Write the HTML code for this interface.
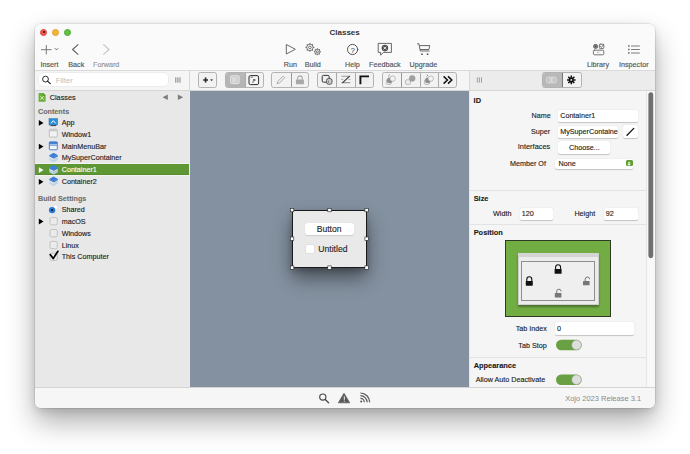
<!DOCTYPE html>
<html><head><meta charset="utf-8">
<style>
*{box-sizing:border-box;margin:0;padding:0}
html,body{width:690px;height:454px;overflow:hidden;background:#fff}
body{position:relative;font-family:"Liberation Sans",sans-serif;color:#222}
.a{position:absolute}
.t{position:absolute;white-space:nowrap;line-height:1}
#win{position:absolute;left:35px;top:23.5px;width:620px;height:384.1px;border-radius:6px;background:#fafafa;
 box-shadow:0 0 0 0.5px rgba(0,0,0,0.14),0 14px 28px rgba(0,0,0,0.32),0 3px 8px rgba(0,0,0,0.12);overflow:hidden}
#pg{position:absolute;left:-35px;top:-23.5px;width:690px;height:454px}
.lbl{font-size:7.2px;color:#555;-webkit-text-stroke:0.15px #555}
.side{font-size:7.2px;color:#1a1a1a;-webkit-text-stroke:0.12px #1a1a1a}
.hdr{font-size:7.2px;color:#6e6e6e;font-weight:bold;-webkit-text-stroke:0.1px #6e6e6e}
.ins{font-size:7.2px;color:#1a1a1a;-webkit-text-stroke:0.12px #1a1a1a}
.seg{position:absolute;top:72px;height:16px;border:1px solid #b3b3b3;border-radius:2.5px;background:#f2f2f2;overflow:hidden}
.dv{position:absolute;top:0;bottom:0;width:1px;background:#c2c2c2}
.fld{position:absolute;background:#fff;box-shadow:0 0.5px 1px rgba(0,0,0,0.2);border-radius:1.5px}
</style></head><body>
<div id="win"><div id="pg">
 <!-- toolbar -->
 <div class="a" style="left:35px;top:23px;width:620px;height:47px;background:#fafafa"></div>
 <div class="a" style="left:35px;top:70px;width:620px;height:1px;background:#dadada"></div>
 <!-- traffic lights -->
 <div class="a" style="left:40px;top:28.5px;width:7px;height:7px;border-radius:50%;background:#ee5a52;border:0.5px solid #d8463e"></div>
 <div class="a" style="left:42.6px;top:31px;width:2px;height:2px;border-radius:50%;background:#4a0a08;z-index:2"></div>
 <div class="a" style="left:52.3px;top:28.5px;width:7px;height:7px;border-radius:50%;background:#f4b63a;border:0.5px solid #dea02a"></div>
 <div class="a" style="left:64.4px;top:28.5px;width:7px;height:7px;border-radius:50%;background:#5fc33f;border:0.5px solid #4aa92e"></div>
 <div class="t bold" style="left:329.5px;top:28.6px;font-size:8px;font-weight:bold;color:#333">Classes</div>

 <div class="t lbl" style="left:40.5px;top:61px">Insert</div>
 <div class="t lbl" style="left:68.3px;top:61px">Back</div>
 <div class="t lbl" style="left:93px;top:61px;color:#b8b8b8">Forward</div>
 <div class="t lbl" style="left:283.8px;top:61px">Run</div>
 <div class="t lbl" style="left:304.8px;top:61px">Build</div>
 <div class="t lbl" style="left:345px;top:61px">Help</div>
 <div class="t lbl" style="left:369px;top:61px">Feedback</div>
 <div class="t lbl" style="left:409.6px;top:61px">Upgrade</div>
 <div class="t lbl" style="left:587px;top:61px">Library</div>
 <div class="t lbl" style="left:619px;top:61px">Inspector</div>

 <!-- second toolbar row -->
 <div class="a" style="left:35px;top:71px;width:620px;height:19px;background:#f5f5f5"></div>
 <div class="a" style="left:470px;top:71px;width:185px;height:19px;background:#ececec"></div>
 <div class="a" style="left:35px;top:90px;width:620px;height:1px;background:#d6d6d6"></div>
 <div class="a" style="left:189px;top:71px;width:1px;height:19px;background:#d8d8d8"></div>
 <div class="a" style="left:469px;top:71px;width:1px;height:19px;background:#d8d8d8"></div>

 <!-- inspector toolbar control -->
 <div class="seg" style="left:541.9px;width:39.9px;background:#f3f3f3"><div class="a" style="left:0;top:0;width:19.4px;height:14px;background:#b9b9b9"></div><div class="dv" style="left:19.4px;background:#777"></div></div>
 <svg class="a" style="left:0;top:0" width="690" height="454" viewBox="0 0 690 454">
  <rect x="546.9" y="77.2" width="9.2" height="5.6" rx="1" fill="none" stroke="#e4e4e4" stroke-width="0.9"/>
  <text x="551.5" y="82" font-family="Liberation Sans" font-size="5" font-weight="bold" fill="#e8e8e8" text-anchor="middle">ID</text>
  <path d="M573.50 79.90L575.60 79.90M572.86 81.46L574.34 82.94M571.30 82.10L571.30 84.20M569.74 81.46L568.26 82.94M569.10 79.90L567.00 79.90M569.74 78.34L568.26 76.86M571.30 77.70L571.30 75.60M572.86 78.34L574.34 76.86" stroke="#111" stroke-width="1.5"/>
  <circle cx="571.30" cy="79.90" r="2.6" fill="#111"/>
  <circle cx="571.30" cy="79.90" r="0.9" fill="#f7f7f7"/>
 </svg>
 <!-- filter -->
 <div class="a" style="left:38.8px;top:72.5px;width:129px;height:13.3px;background:#fff;border-radius:4px;box-shadow:0 0 0 0.5px #e4e4e4"></div>
 <div class="t" style="left:55.8px;top:77px;font-size:7.6px;color:#bdbdbd">Filter</div>

 <!-- sidebar -->
 <div class="a" style="left:35px;top:91px;width:154px;height:296px;background:#e8e8e8"></div>
 <div class="a" style="left:189px;top:91px;width:1px;height:296px;background:#ececec"></div>
 <div class="t side" style="left:49.7px;top:93.8px;font-size:7.3px">Classes</div>
 <div class="t hdr" style="left:38px;top:107.6px">Contents</div>
 <div class="a" style="left:35px;top:164px;width:154px;height:11.4px;background:#5e9733;box-shadow:0 -1px 0 rgba(255,255,255,0.45),0 1px 0 rgba(255,255,255,0.45),inset 0 -1px 0 rgba(0,0,0,0.07)"></div>
 <div class="t side" style="left:61.7px;top:118.5px">App</div>
 <div class="t side" style="left:61.7px;top:131px">Window1</div>
 <div class="t side" style="left:61.7px;top:142.6px">MainMenuBar</div>
 <div class="t side" style="left:61.7px;top:154.2px">MySuperContainer</div>
 <div class="t side" style="left:61.7px;top:166.1px;color:#fff;-webkit-text-stroke:0.12px #fff">Container1</div>
 <div class="t side" style="left:61.7px;top:177.6px">Container2</div>
 <div class="t hdr" style="left:38px;top:195px">Build Settings</div>
 <div class="t side" style="left:61.7px;top:206px">Shared</div>
 <div class="t side" style="left:61.7px;top:217.7px">macOS</div>
 <div class="t side" style="left:61.7px;top:230px">Windows</div>
 <div class="t side" style="left:61.7px;top:241.7px">Linux</div>
 <div class="t side" style="left:61.7px;top:252.5px">This Computer</div>



 <!-- canvas toolbar -->
 <div class="seg" style="left:198.2px;width:19.2px"></div>
 <div class="seg" style="left:225.1px;width:38.8px"><div class="a" style="left:0;top:0;width:19.4px;height:14px;background:linear-gradient(#b9b9b9,#b3b3b3)"></div><div class="dv" style="left:19.4px;background:#aaa"></div></div>
 <div class="seg" style="left:271.3px;width:38px"><div class="dv" style="left:18.3px;background:#999"></div></div>
 <div class="seg" style="left:317.2px;width:56.9px"><div class="dv" style="left:17.7px;background:#aaa"></div><div class="dv" style="left:36.4px;background:#aaa"></div></div>
 <div class="seg" style="left:381.6px;width:75.6px"><div class="dv" style="left:18px;background:#999"></div><div class="dv" style="left:37.2px;background:#aaa"></div><div class="dv" style="left:55.1px;background:#aaa"></div></div>
 <svg class="a" style="left:0;top:0" width="690" height="454" viewBox="0 0 690 454">
  <!-- +v -->
  <path d="M205.6 77.6V82.4M203.2 80H208" stroke="#2a2a2a" stroke-width="1.7"/>
  <path d="M210.6 79.6H212.6L211.6 80.9Z" fill="#333" stroke="#333" stroke-width="0.4"/>
  <!-- seg 2 icons -->
  <rect x="230.6" y="75.8" width="8.6" height="7.8" rx="1.2" fill="#c4c4c4" stroke="#ececec" stroke-width="0.9"/>
  <rect x="232" y="77" width="5.8" height="5.4" fill="#d6d6d6"/>
  <path d="M233.6 77V82.4" stroke="#eee" stroke-width="0.6"/>
  <rect x="249" y="75.6" width="9.6" height="9" rx="1.5" fill="#f4f4f4" stroke="#2a2a2a" stroke-width="1"/>
  <path d="M250.6 77.2H252.8" stroke="#333" stroke-width="0.7"/>
  <rect x="253" y="79.2" width="2.4" height="1.6" fill="#555"/><rect x="252.3" y="81.3" width="1.4" height="1.4" fill="#666"/>
  <!-- pencil -->
  <path d="M277.1 83.6L277.8 81.4L283 76.2L284.6 77.8L279.4 83Z" fill="none" stroke="#999" stroke-width="0.8"/>
  <!-- lock -->
  <path d="M297.6 79.8V78.2A2.3 2.3 0 0 1 302.2 78.2V79.8" fill="none" stroke="#a8a8a8" stroke-width="1.1"/>
  <rect x="295.9" y="79.6" width="8" height="4.6" rx="0.5" fill="#a8a8a8"/>
  <!-- group4 icons -->
  <rect x="322.2" y="75.4" width="7" height="6.8" rx="1.3" fill="#eee" stroke="#333" stroke-width="1"/>
  <rect x="326.6" y="78.6" width="5.4" height="5.6" rx="1.8" fill="#d0d0d0" stroke="#444" stroke-width="0.9"/>
  <path d="M328.6 80.6V82.6" stroke="#333" stroke-width="0.6"/>
  <path d="M341.4 76.2H350.2M341.4 82.6H350.2" fill="none" stroke="#9a9a9a" stroke-width="1.1"/>
  <path d="M342.4 82.8L349.6 76.2" fill="none" stroke="#333" stroke-width="1.1"/>
  <path d="M341 79.4H343.4M348.2 79.4H350.6" stroke="#aaa" stroke-width="0.9"/>
  <rect x="360.4" y="76.2" width="8.6" height="7.8" fill="#ededed"/>
  <path d="M360.4 84.2V76.4H369" fill="none" stroke="#111" stroke-width="1.9"/>
  <!-- group5 icons -->
  <g stroke="#999" stroke-width="0.6">
   <rect x="386.4" y="79.8" width="4.8" height="4.6" rx="1" fill="#eee"/><circle cx="389.6" cy="80.4" r="2.6" fill="#8e8e8e"/><circle cx="392.6" cy="78.6" r="2.7" fill="#f2f2f2"/>
   <rect x="405.6" y="79.8" width="4.8" height="4.6" rx="1" fill="#eee"/><circle cx="412.2" cy="78.4" r="2.9" fill="#a0a0a0"/>
   <rect x="424.6" y="79.8" width="4.8" height="4.6" rx="1" fill="#eee"/><circle cx="427.8" cy="80.4" r="2.6" fill="#8e8e8e"/><circle cx="430.8" cy="78.6" r="2.7" fill="#f2f2f2"/>
  </g>
  <path d="M388.4 76.2L389.8 74.8M426.6 76.2L428 74.8" stroke="#666" stroke-width="0.9"/>
  <path d="M443.6 76.4L447.4 80L443.6 83.6M448 76.4L451.8 80L448 83.6" fill="none" stroke="#111" stroke-width="1.5"/>
 </svg>
 <!-- canvas -->
 <div class="a" style="left:190px;top:91px;width:279px;height:296px;background:#8491a0"></div>


 <!-- container control -->
 <div class="a" style="left:292px;top:210px;width:75px;height:58px;background:#e9e9e9;border:1px solid #1a1a1a;box-shadow:0 10px 18px rgba(0,0,0,0.45),0 3px 6px rgba(0,0,0,0.2)"></div>
 <div class="a" style="left:305.3px;top:222.8px;width:48.7px;height:12.7px;background:#fff;border-radius:3px;box-shadow:0 0.5px 1px rgba(0,0,0,0.12)"></div>
 <div class="t" style="left:316.7px;top:224.6px;font-size:8.6px;color:#222;-webkit-text-stroke:0.12px #222">Button</div>
 <div class="a" style="left:306.4px;top:244.5px;width:7.9px;height:8.2px;background:#fff;border-radius:1.5px;box-shadow:0 0 0 0.5px rgba(0,0,0,0.08)"></div>
 <div class="t" style="left:318.3px;top:244.5px;font-size:8.6px;color:#222;-webkit-text-stroke:0.12px #222">Untitled</div>
 <svg class="a" style="left:0;top:0" width="690" height="454" viewBox="0 0 690 454">
  <g fill="#fff" stroke="#222" stroke-width="0.6">
   <rect x="290.4" y="208.4" width="3.4" height="3.4"/><rect x="327.8" y="208.4" width="3.4" height="3.4"/><rect x="364.9" y="208.4" width="3.4" height="3.4"/>
   <rect x="290.4" y="237" width="3.4" height="3.4"/><rect x="364.9" y="237" width="3.4" height="3.4"/>
   <rect x="290.4" y="265.9" width="3.4" height="3.4"/><rect x="327.8" y="265.9" width="3.4" height="3.4"/><rect x="364.9" y="265.9" width="3.4" height="3.4"/>
  </g>
 </svg>
 <!-- status bar -->
 <div class="a" style="left:35px;top:387px;width:620px;height:1px;background:#d4d4d4"></div>
 <div class="a" style="left:35px;top:388px;width:620px;height:20px;background:#f6f6f6"></div>
 <div class="t" style="left:565.2px;top:395px;font-size:7.5px;color:#8a8a8a">Xojo 2023 Release 3.1</div>

 <!-- inspector -->
 <div class="a" style="left:469px;top:91px;width:1px;height:296px;background:#e8e8e8"></div>
 <div class="a" style="left:470px;top:91px;width:185px;height:296px;background:#f5f5f5"></div>
 <div class="a" style="left:646px;top:91px;width:9px;height:296px;background:#f8f8f8;border-left:1px solid #e6e6e6"></div>


 <div class="t ins bold" style="left:473.6px;top:97.3px;font-weight:bold;font-size:7.4px">ID</div>
 <div class="t ins" style="left:531.6px;top:112.3px">Name</div>
 <div class="t ins" style="left:530.9px;top:127.8px">Super</div>
 <div class="t ins" style="left:517.8px;top:143.3px;font-size:7.4px">Interfaces</div>
 <div class="t ins" style="left:510px;top:159.5px">Member Of</div>
 <div class="fld" style="left:558.3px;top:110px;width:80.1px;height:12.3px"></div>
 <div class="t ins" style="left:560.2px;top:112px">Container1</div>
 <div class="fld" style="left:558.3px;top:125.6px;width:60.2px;height:12.4px;overflow:hidden"><div class="t ins" style="left:1.9px;top:2.7px">MySuperContainer</div></div>
 <div class="fld" style="left:622.7px;top:124.8px;width:15.7px;height:13.2px;border-radius:2px"></div>
 <div class="fld" style="left:558.3px;top:141.3px;width:52px;height:12.4px;border-radius:2.5px"></div>
 <div class="t ins" style="left:569px;top:143.6px">Choose...</div>
 <div class="fld" style="left:555px;top:158.6px;width:78.4px;height:10px;border-radius:2px"></div>
 <div class="t ins" style="left:558.6px;top:160.3px">None</div>
 <div class="a" style="left:625.6px;top:160.2px;width:7px;height:6.3px;border-radius:1.5px;background:#5f9e35"></div>
 <div class="a" style="left:470px;top:190px;width:176px;height:1px;background:#e3e3e3"></div>
 <div class="t ins bold" style="left:473.7px;top:194.9px;font-weight:bold;font-size:7.4px">Size</div>
 <div class="t ins" style="left:493px;top:209.8px">Width</div>
 <div class="fld" style="left:519.6px;top:207.9px;width:33.9px;height:11.8px"></div>
 <div class="t ins" style="left:521.7px;top:210.4px">120</div>
 <div class="t ins" style="left:574.4px;top:209.8px">Height</div>
 <div class="fld" style="left:603.8px;top:207.9px;width:34.5px;height:11.8px"></div>
 <div class="t ins" style="left:605.7px;top:210.4px">92</div>
 <div class="a" style="left:470px;top:224px;width:176px;height:1px;background:#e3e3e3"></div>
 <div class="t ins bold" style="left:473.7px;top:229px;font-weight:bold;font-size:7.4px">Position</div>
 <div class="a" style="left:505px;top:240.4px;width:105.5px;height:77px;background:#72ad44;border:1px solid #2e3a24"></div>
 <div class="a" style="left:517.5px;top:252.9px;width:81px;height:52.5px;background:#ececec;border:1px solid #cfcfcf;box-shadow:0 1.5px 2px rgba(0,0,0,0.35)"></div>
 <div class="a" style="left:518px;top:253.4px;width:80px;height:4px;background:#d4d4d4"></div>
 <div class="a" style="left:520.8px;top:260.8px;width:74px;height:40.7px;background:#efefef;border:1px solid #8e8e8e"></div>
 <div class="t ins" style="left:515.7px;top:324.6px">Tab Index</div>
 <div class="fld" style="left:554.8px;top:322.3px;width:79px;height:13.1px"></div>
 <div class="t ins" style="left:557px;top:325.2px">0</div>
 <div class="t ins" style="left:518.3px;top:341.6px">Tab Stop</div>
 <div class="a" style="left:470px;top:356.5px;width:176px;height:1px;background:#e3e3e3"></div>
 <div class="t ins bold" style="left:473.7px;top:362px;font-weight:bold;font-size:7.4px">Appearance</div>
 <div class="t ins" style="left:475.7px;top:376px">Allow Auto Deactivate</div>
 <svg class="a" style="left:0;top:0" width="690" height="454" viewBox="0 0 690 454">
  <path d="M627 135.2L633.8 128.4" stroke="#111" stroke-width="1.3" stroke-linecap="round"/>
  <path d="M627.4 163.6L629.1 161.6L630.8 163.6ZM627.4 164L629.1 166L630.8 164Z" fill="#fff" opacity="0.9"/>
  <!-- locks -->
  <g id="lk">
   <path d="M555.6 269.3V267.3A2.5 2.5 0 0 1 560.6 267.3V269.3" fill="none" stroke="#111" stroke-width="1.1"/>
   <rect x="554.6" y="269" width="7" height="4.8" rx="0.6" fill="#111"/>
   <path d="M526.8 281.2V279.2A2.5 2.5 0 0 1 531.8 279.2V281.2" fill="none" stroke="#111" stroke-width="1.1"/>
   <rect x="525.8" y="280.9" width="7" height="4.8" rx="0.6" fill="#111"/>
  </g>
  <g>
   <path d="M585.2 281V279.2A2.2 2.2 0 0 1 589.6 279.2" fill="none" stroke="#777" stroke-width="1"/>
   <rect x="583" y="280.9" width="6.6" height="4.3" rx="0.5" fill="#777"/>
   <path d="M556.7 293.2V291.4A2.2 2.2 0 0 1 561.1 291.4" fill="none" stroke="#777" stroke-width="1"/>
   <rect x="554.8" y="293.1" width="6.6" height="4.3" rx="0.5" fill="#777"/>
  </g>
  <!-- toggles -->
  <rect x="556" y="339.8" width="25.7" height="10.4" rx="5.2" fill="#69a043"/>
  <circle cx="576.5" cy="345" r="4.7" fill="#dedede" stroke="#b0b0b0" stroke-width="0.5"/>
  <rect x="556" y="374.5" width="25.7" height="10.4" rx="5.2" fill="#69a043"/>
  <circle cx="576.5" cy="379.7" r="4.7" fill="#dedede" stroke="#b0b0b0" stroke-width="0.5"/>
  <!-- scrollbar -->
  <rect x="648.4" y="92.2" width="4.8" height="166" rx="2.4" fill="#6f6f6f"/>
  <!-- status icons -->
  <circle cx="322.8" cy="397.1" r="3.1" fill="none" stroke="#4a4a4a" stroke-width="1.2"/>
  <path d="M325.2 399.5L328.6 402.7" stroke="#4a4a4a" stroke-width="1.3" stroke-linecap="round"/>
  <path d="M344 393.2L349.7 402.8H338.3Z" fill="#5a5a5a" stroke="#5a5a5a" stroke-width="0.7" stroke-linejoin="round"/>
  <path d="M344.3 396.4V399.8M344.3 400.7V401.7" stroke="#f6f6f6" stroke-width="1"/>
  <g fill="none" stroke="#555" stroke-width="1.2">
   <path d="M360.4 398.4A3.9 3.9 0 0 1 364.3 402.3"/>
   <path d="M360.4 395.6A6.7 6.7 0 0 1 367.1 402.3"/>
   <path d="M360.4 393A9.3 9.3 0 0 1 369.7 402.3"/>
  </g>
  <circle cx="361.2" cy="401.6" r="1" fill="#555"/>
 </svg>
 <svg class="a" style="left:0;top:0" width="690" height="454" viewBox="0 0 690 454">
  <g fill="none" stroke="#6a6a6a" stroke-width="1" stroke-linecap="round" stroke-linejoin="round">
   <!-- insert + -->
   <path d="M46.3 45.4V54M41.4 49.7H51.2" stroke="#6a6a6a" stroke-width="0.9"/>
   <path d="M55.2 48.6L56.5 49.9L57.8 48.6" stroke="#555" stroke-width="1"/>
   <!-- back / forward -->
   <path d="M78 44.6L72.6 49.5L78 54.3" stroke="#5c5c5c" stroke-width="1.05"/>
   <path d="M103.6 44.6L109 49.5L103.6 54.3" stroke="#c4c4c4" stroke-width="1.05"/>
   <!-- run -->
   <path d="M286.3 44.9V54L295 49.45Z" stroke="#6a6a6a" stroke-width="1"/>
   <!-- help -->
   <circle cx="352.6" cy="49.5" r="5.1" stroke="#555" stroke-width="1"/>
   <!-- feedback -->
   <path d="M378.6 43.4H391.4V52.4H383.4L380.6 55.2V52.4H378.6Z" stroke="#666" stroke-width="1"/>
   <!-- cart -->
   <path d="M417.4 43.8H418.9L420.3 51H429.2M419.8 45.6H429.8L428.9 49.5H420.4" stroke="#666" stroke-width="1"/>
   <!-- library -->
   <rect x="593.4" y="50.2" width="10.4" height="4.6" rx="1" stroke="#666" stroke-width="0.9"/>
   <rect x="599.4" y="44.2" width="4.4" height="4.4" rx="0.8" stroke="#666" stroke-width="0.9"/>
   <path d="M600.3 46.4L601.4 47.4L603.6 44.6" stroke="#555" stroke-width="0.8"/>
  </g>
  <!-- help ? -->
  <text x="352.6" y="52.5" font-family="Liberation Sans" font-size="7.8" fill="#333" text-anchor="middle">?</text>
  <!-- feedback x-circle -->
  <circle cx="384.9" cy="48.1" r="3.3" fill="#505050"/>
  <path d="M383.5 46.7L386.3 49.5M386.3 46.7L383.5 49.5" stroke="#f4f4f4" stroke-width="0.9"/>
  <circle cx="422" cy="54.2" r="0.9" fill="#555"/>
  <circle cx="427.6" cy="54.2" r="0.9" fill="#555"/>
  <!-- library bits -->
  <circle cx="595.6" cy="46.4" r="2.1" fill="#8a8a8a" stroke="#555" stroke-width="0.7"/><circle cx="595.6" cy="46.4" r="0.8" fill="#444"/>
  <path d="M597 52.4H600" stroke="#888" stroke-width="0.8" stroke-dasharray="0.8 0.6"/>
 
  <!-- inspector icon -->
  <g fill="#777"><rect x="628" y="45.2" width="1.6" height="1.6"/><rect x="628" y="48.7" width="1.6" height="1.6"/><rect x="628" y="52.2" width="1.6" height="1.6"/></g>
  <g stroke="#7a7a7a" stroke-width="1"><path d="M631 46H639.8M631 49.5H639.8M631 53H639.8"/></g>
  <!-- gears -->
  <g fill="none" stroke="#6a6a6a"><circle cx="309.90" cy="47.40" r="3.20" stroke-width="0.9"/><path d="M313.10 47.40L314.30 47.40M312.16 49.66L313.01 50.51M309.90 50.60L309.90 51.80M307.64 49.66L306.79 50.51M306.70 47.40L305.50 47.40M307.64 45.14L306.79 44.29M309.90 44.20L309.90 43.00M312.16 45.14L313.01 44.29" stroke-width="1.1" stroke-linecap="butt"/><circle cx="309.90" cy="47.40" r="1.30" stroke-width="0.9"/><circle cx="317.40" cy="51.80" r="2.50" stroke-width="0.9"/><path d="M319.90 51.80L320.90 51.80M319.17 53.57L319.87 54.27M317.40 54.30L317.40 55.30M315.63 53.57L314.93 54.27M314.90 51.80L313.90 51.80M315.63 50.03L314.93 49.33M317.40 49.30L317.40 48.30M319.17 50.03L319.87 49.33" stroke-width="1.1" stroke-linecap="butt"/><circle cx="317.40" cy="51.80" r="1.00" stroke-width="0.9"/></g>
 </svg>

 <!-- filter magnifier & grips -->
 <svg class="a" style="left:0;top:0" width="690" height="454" viewBox="0 0 690 454">
  <circle cx="45.5" cy="79.1" r="2.9" fill="none" stroke="#222" stroke-width="0.95"/>
  <path d="M47.5 81.1L50.3 83.6" stroke="#222" stroke-width="1.2" stroke-linecap="round"/>
  <path d="M175.8 77.3V82.7M177.9 77.3V82.7M180 77.3V82.7" stroke="#666" stroke-width="0.8"/>
  <path d="M477.3 77.3V82.7M479.4 77.3V82.7M481.5 77.3V82.7" stroke="#8a8a8a" stroke-width="0.8"/>
  <!-- classes nav arrows -->
  <path d="M167.8 94.4V100L162.6 97.2Z" fill="#7c7c7c"/>
  <path d="M177.9 94.4V100L183.2 97.2Z" fill="#7c7c7c"/>
 </svg>

 <svg class="a" style="left:0;top:0" width="690" height="454" viewBox="0 0 690 454">
  <!-- classes doc -->
  <path d="M38.6 93H43.2L45.6 95.6V101.7H38.6Z" fill="#69b136"/>
  <path d="M43.2 93V95.6H45.6" fill="#4f8c26"/>
  <g stroke="#e6f3da" stroke-width="0.9" fill="none"><path d="M40.3 96.2L43.8 99.6M43.8 96.2L40.3 99.6"/></g>
  <!-- triangles -->
  <g fill="#000">
   <path d="M38.8 120V125.8L43.5 122.9Z"/>
   <path d="M38.8 143.7V149.5L43.5 146.6Z"/>
   <path d="M38.8 178.9V184.7L43.5 181.8Z"/>
   <path d="M38.8 218.6V224.4L43.5 221.5Z"/>
  </g>
  <path d="M38.8 167.2V173L43.5 170.1Z" fill="#fff"/>
  <!-- app -->
  <rect x="49" y="118.6" width="8.6" height="6.4" fill="#2e8fd8"/>
  <rect x="49" y="118.6" width="8.6" height="6.4" fill="none" stroke="#1e6fb5" stroke-width="0.5"/>
  <path d="M51 123.3L53.3 120.7L55.6 123.3" fill="none" stroke="#fff" stroke-width="1"/>
  <rect x="50.5" y="125" width="5.6" height="1.1" fill="#4a4a4a"/>
  <!-- window1 -->
  <rect x="49.3" y="129.3" width="8" height="7.8" rx="0.8" fill="#f2f2f2" stroke="#b4b4b4" stroke-width="0.8"/>
  <rect x="49.7" y="129.7" width="7.2" height="1.6" fill="#c8c8c8"/>
  <!-- mainmenubar -->
  <rect x="49.3" y="141.9" width="8" height="7.9" rx="0.8" fill="#f4f4f4" stroke="#3a78cf" stroke-width="0.9"/>
  <rect x="49.3" y="141.9" width="8" height="2" fill="#3a78cf"/>
  <rect x="49.8" y="144.6" width="7" height="1" fill="#3a78cf"/>
  <g transform="translate(49.10 152.60)">
   <path d="M0.3 5.2L4.5 7.6L8.7 5.2V7.4L4.5 9.6L0.3 7.4Z" fill="#bcd3e6"/>
   <path d="M0.3 2.6V5.4L4.5 7.8V5Z" fill="#d9e6f0"/><path d="M8.7 2.6V5.4L4.5 7.8V5Z" fill="#c4d7e8"/>
   <path d="M4.5 0.2L8.8 2.6L4.5 5L0.2 2.6Z" fill="#3a7fd9"/>
   <path d="M0.2 2.6L4.5 5L8.8 2.6V3.6L4.5 6L0.2 3.6Z" fill="#2f6cc0"/>
  </g>
  <g transform="translate(49.10 164.80)">
   <path d="M0.3 5.2L4.5 7.6L8.7 5.2V7.4L4.5 9.6L0.3 7.4Z" fill="#bcd3e6"/>
   <path d="M0.3 2.6V5.4L4.5 7.8V5Z" fill="#d9e6f0"/><path d="M8.7 2.6V5.4L4.5 7.8V5Z" fill="#c4d7e8"/>
   <path d="M4.5 0.2L8.8 2.6L4.5 5L0.2 2.6Z" fill="#3a7fd9"/>
   <path d="M0.2 2.6L4.5 5L8.8 2.6V3.6L4.5 6L0.2 3.6Z" fill="#2f6cc0"/>
  </g>
  <g transform="translate(49.10 176.30)">
   <path d="M0.3 5.2L4.5 7.6L8.7 5.2V7.4L4.5 9.6L0.3 7.4Z" fill="#bcd3e6"/>
   <path d="M0.3 2.6V5.4L4.5 7.8V5Z" fill="#d9e6f0"/><path d="M8.7 2.6V5.4L4.5 7.8V5Z" fill="#c4d7e8"/>
   <path d="M4.5 0.2L8.8 2.6L4.5 5L0.2 2.6Z" fill="#3a7fd9"/>
   <path d="M0.2 2.6L4.5 5L8.8 2.6V3.6L4.5 6L0.2 3.6Z" fill="#2f6cc0"/>
  </g>
  <!-- shared radio -->
  <circle cx="55.2" cy="207.6" r="2.7" fill="#fff" stroke="#d0d0d0" stroke-width="0.5"/>
  <circle cx="52.1" cy="210.1" r="3.2" fill="#2a7ad8"/>
  <circle cx="52.1" cy="210.1" r="1.1" fill="#0a1a30"/>
  <!-- checkboxes -->
  <g fill="#ebebeb" stroke="#b8b8b8" stroke-width="0.8">
   <rect x="50" y="217.6" width="7.3" height="7.3" rx="1.5"/>
   <rect x="50" y="229.5" width="7.3" height="7.3" rx="1.5"/>
   <rect x="50" y="241.4" width="7.3" height="7.3" rx="1.5"/>
   <rect x="50" y="253.1" width="7.3" height="7.3" rx="1.5"/>
  </g>
  <path d="M50.2 254.6L53.2 258.6L57.9 251.3" fill="none" stroke="#000" stroke-width="1.7" stroke-linejoin="round" stroke-linecap="round"/>
 </svg>
</div></div>
</body></html>
